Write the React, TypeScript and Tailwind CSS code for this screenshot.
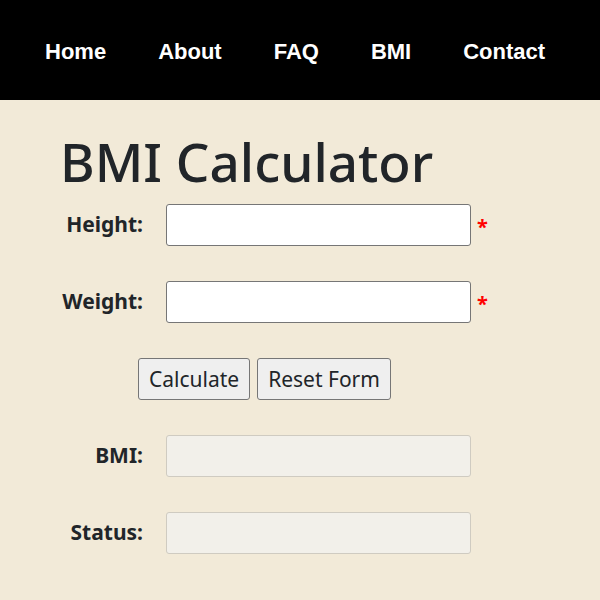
export default function App() {
  const links = ['Home', 'About', 'FAQ', 'BMI', 'Contact']

  const fields = [
    { label: 'Height:', required: true },
    { label: 'Weight:', required: true }
  ]

  const results = ['BMI:', 'Status:']

  return (
    <div className="min-h-[600px] bg-[#f2ead8] text-[#212529]" style={{ fontFamily: '"Noto Sans", sans-serif' }}>
      <nav className="h-[100px] bg-black flex items-center px-[19px] pt-[2px]">
        {links.map((link) => (
          <a
            key={link}
            href="#"
            className="px-[26px] text-white text-[22px] font-bold"
            style={{ fontFamily: '"Liberation Sans", Arial, sans-serif' }}
          >
            {link}
          </a>
        ))}
      </nav>

      <main className="pl-[60px] pt-[24px]">
        <h1 className="text-[53px] font-medium leading-[76px] mb-[4px]">BMI Calculator</h1>

        <div className="flex flex-col gap-[35px]">
          {fields.map((field) => (
            <div key={field.label} className="flex items-center">
              <label className="w-[83px] text-right text-[21px] font-bold">{field.label}</label>
              <input
                type="text"
                className="ml-[23px] w-[305px] h-[42px] bg-white border border-[#767676] rounded-[3px]"
              />
              {field.required && <span className="ml-[6px] pt-[4px] text-[#ff0000] text-[20px] font-bold">*</span>}
            </div>
          ))}

          <div className="flex items-center gap-[7px] ml-[78px]">
            <button className="h-[42px] px-[10px] pt-[2px] text-[21px] bg-[#efefef] border border-[#767676] rounded-[3px]">
              Calculate
            </button>
            <button className="h-[42px] px-[10px] pt-[2px] text-[21px] bg-[#efefef] border border-[#767676] rounded-[3px]">
              Reset Form
            </button>
          </div>

          {results.map((label) => (
            <div key={label} className="flex items-center">
              <label className="w-[83px] text-right text-[21px] font-bold">{label}</label>
              <input
                type="text"
                disabled
                className="ml-[23px] w-[305px] h-[42px] bg-[#f2f0ea] border border-[#cfcbc1] rounded-[3px]"
              />
            </div>
          ))}
        </div>
      </main>
    </div>
  )
}
